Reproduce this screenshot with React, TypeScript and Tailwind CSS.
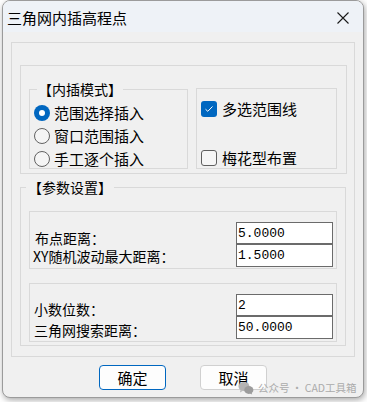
import React from "react";

function Radio({ checked, label }: { checked?: boolean; label: string }) {
  return (
    <div className="flex items-center h-[23px]">
      {checked ? (
        <div className="w-[16px] h-[16px] rounded-full bg-[#0067c0] flex items-center justify-center">
          <div className="w-[6px] h-[6px] rounded-full bg-white" />
        </div>
      ) : (
        <div className="w-[16px] h-[16px] rounded-full border border-[#626262] bg-[#f5f5f5]" />
      )}
      <span className="ml-[4px] text-[15px] leading-[23px]">{label}</span>
    </div>
  );
}

function Check({ checked, label }: { checked?: boolean; label: string }) {
  return (
    <div className="flex items-center h-[20px]">
      {checked ? (
        <div className="w-[16px] h-[16px] rounded-[3px] bg-[#0067c0] flex items-center justify-center">
          <svg width="10" height="8" viewBox="0 0 10 8">
            <path d="M1.5 4.2L3.8 6.3L8.5 1.5" fill="none" stroke="#ffffff" strokeWidth="1" />
          </svg>
        </div>
      ) : (
        <div className="w-[16px] h-[16px] rounded-[3px] border border-[#5f5f5f] bg-[#f6f6f6]" />
      )}
      <span className="ml-[5px] text-[15px] leading-[20px]">{label}</span>
    </div>
  );
}

function Field({ value, tall }: { value: string; tall?: boolean }) {
  return (
    <div
      className={
        (tall ? "h-[23px] " : "h-[22px] ") +
        "w-[97px] border border-[#6b6b6b] bg-white pl-[1px] flex items-center font-['Liberation_Mono',monospace] text-[13px] leading-none"
      }
    >
      {value}
    </div>
  );
}

export default function App() {
  return (
    <div className="w-[367px] h-[402px] bg-white pl-[2px] font-['Noto_Sans_CJK_SC',sans-serif] text-black">
      <div className="relative w-[362px] h-[398px] rounded-[8px] border border-[#9b9b9b] bg-[#f0f0f0] overflow-hidden shadow-[1px_2px_6px_rgba(0,0,0,0.35)]">
        {/* title bar */}
        <div className="h-[31px] bg-[#eef2f7] flex items-center justify-between pl-[4px] pr-[14px]">
          <span className="text-[15px] leading-none pt-[2px]">三角网内插高程点</span>
          <svg width="12" height="12" viewBox="0 0 12 12" className="mt-[2px]">
            <path d="M0.5 0.5L11.5 11.5M11.5 0.5L0.5 11.5" stroke="#1a1a1a" strokeWidth="1.1" />
          </svg>
        </div>

        {/* body */}
        <div className="pl-[8px] pt-[10px]">
          <div className="w-[344px] h-[315px] border border-[#d9d9d9] pl-[8px] pt-[22px]">
            {/* top group */}
            <div className="w-[327px] h-[109px] border border-[#d9d9d9] flex pl-[8px] pt-[22px] gap-[8px]">
              <div className="relative mt-[1px] w-[159px] h-[80px] border border-[#d9d9d9] pl-[4px] pt-[11px]">
                <span className="absolute left-[7px] top-[-11px] px-[1px] bg-[#f0f0f0] text-[14px] leading-[20px]">
                  【内插模式】
                </span>
                <Radio checked label="范围选择插入" />
                <Radio label="窗口范围插入" />
                <Radio label="手工逐个插入" />
              </div>
              <div className="w-[141px] h-[81px] border border-[#d9d9d9] pl-[4px] pt-[10px] flex flex-col gap-[29px]">
                <Check checked label="多选范围线" />
                <Check label="梅花型布置" />
              </div>
            </div>

            {/* params group */}
            <div className="relative mt-[13px] w-[326px] h-[159px] border border-[#d9d9d9] pl-[8px] pt-[23px]">
              <span className="absolute left-[5px] top-[-11px] px-[2px] bg-[#f0f0f0] text-[14px] leading-[20px]">
                【参数设置】
              </span>
              <div className="w-[308px] h-[58px] border border-[#d9d9d9] flex justify-between pl-[3px] pr-[3px]">
                <div className="pt-[17px] text-[14px] leading-[18px]">
                  <div className="pl-[2px]">布点距离：</div>
                  <div>XY随机波动最大距离：</div>
                </div>
                <div className="pt-[10px]">
                  <Field value="5.0000" />
                  <Field value="1.5000" tall />
                </div>
              </div>
              <div className="mt-[14px] w-[308px] h-[59px] border border-[#d9d9d9] flex justify-between pl-[4px] pr-[3px]">
                <div className="pt-[15px] text-[14px] leading-[21px]">
                  <div>小数位数：</div>
                  <div>三角网搜索距离：</div>
                </div>
                <div className="pt-[10px]">
                  <Field value="2" />
                  <Field value="50.0000" tall />
                </div>
              </div>
            </div>
          </div>

          {/* buttons */}
          <div className="mt-[8px] flex justify-center gap-[34px] pr-[8px]">
            <button className="w-[67px] h-[25px] rounded-[4px] border border-[#0067c0] bg-[#fdfdfd] text-[15px] leading-none">
              确定
            </button>
            <button className="w-[67px] h-[25px] rounded-[4px] border border-[#d0d0d0] bg-[#fdfdfd] text-[15px] leading-none">
              取消
            </button>
          </div>
        </div>

        {/* watermark */}
        <div className="absolute left-[235px] top-[380px] flex items-center gap-[4px] text-[#ababab] whitespace-nowrap">
          <svg width="16" height="14" viewBox="0 0 16 14">
            <ellipse cx="6" cy="5.5" rx="5.5" ry="4.6" fill="#b4b4b4" />
            <path d="M2.5 9L2 11.5L4.8 9.8Z" fill="#b4b4b4" />
            <ellipse cx="10.8" cy="9" rx="4.6" ry="3.9" fill="#9c9c9c" />
            <path d="M13.5 11.5L14.2 13.5L11.8 12.4Z" fill="#9c9c9c" />
          </svg>
          <span className="text-[10.5px] leading-none">公众号 · CAD工具箱</span>
        </div>
      </div>
    </div>
  );
}
